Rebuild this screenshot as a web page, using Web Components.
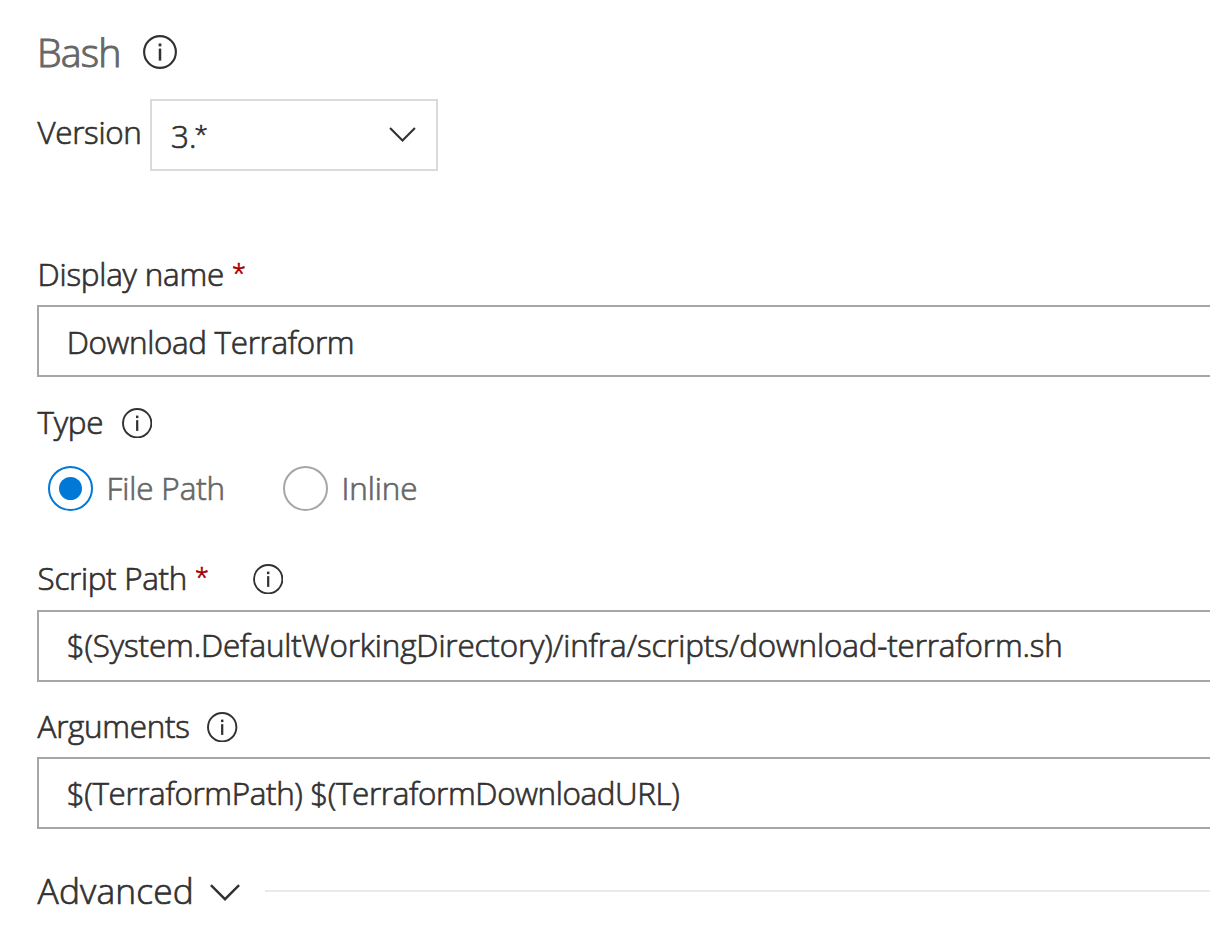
<!DOCTYPE html>
<html lang="en">
<head>
<meta charset="utf-8">
<title>Bash task</title>
<style>
body{margin:0;background:#fff;overflow:hidden}
</style>
</head>
<body>
<task-form></task-form>
<script>
const define=(name,html)=>{
  const t=document.createElement('template');
  t.innerHTML=html;
  customElements.define(name,class extends HTMLElement{
    connectedCallback(){
      if(this.shadowRoot)return;
      this.attachShadow({mode:'open'}).append(t.content.cloneNode(true));
    }
  });
};

define('info-icon',`
<style>:host{display:block;flex:none;width:30.4px;height:30.4px}svg{display:block;width:100%;height:100%}</style>
<svg viewBox="0 0 30 30"><circle cx="15" cy="15" r="14" fill="none" stroke="#323130" stroke-width="1.9"/><rect x="13.8" y="7.5" width="2.4" height="2.5" fill="#323130"/><rect x="13.9" y="12" width="2.2" height="10.6" fill="#323130"/></svg>`);

define('chevron-icon',`
<style>:host{display:block;flex:none;width:27px;height:15px}svg{display:block;width:100%;height:100%}</style>
<svg viewBox="0 0 30 17"><path d="M.9 1.1 15 15.2 29.1 1.1" fill="none" stroke="#323130" stroke-width="2.4"/></svg>`);

define('required-mark',`
<style>:host{display:block;color:#a80000;font-size:25px;line-height:40px;letter-spacing:0}</style>*`);

define('field-label',`
<style>:host{display:flex;height:44px;line-height:44px;padding-left:.6px;white-space:nowrap}
::slotted(info-icon){margin-top:8px}</style><slot></slot>`);

define('text-field',`
<style>:host{display:block;box-sizing:border-box;height:72px;border:2px solid #a6a6a6;border-right:0;padding-left:27.7px;line-height:68px;white-space:nowrap}</style><slot></slot>`);

define('select-box',`
<style>:host{display:flex;box-sizing:border-box;width:288px;height:72px;border:2px solid #dadada;padding:0 20px 0 19px;line-height:70px;justify-content:space-between}
chevron-icon{margin-top:26px}</style><span><slot></slot></span><chevron-icon></chevron-icon>`);

define('radio-option',`
<style>:host{display:flex;height:45px;line-height:43px;color:#666;letter-spacing:-.1px;white-space:nowrap}
i{box-sizing:border-box;width:45px;height:45px;border:2px solid #a6a6a6;border-radius:50%;display:grid;place-items:center;margin-right:13.5px}
:host([checked]) i{border-color:#0078d7}
:host([checked]) i::after{content:"";width:23px;height:23px;border-radius:50%;background:#0078d7}
</style><i></i><slot></slot>`);

define('section-header',`
<style>:host{display:flex;height:44px;line-height:44px;font-size:35.3px;padding-left:.6px}
chevron-icon{width:30px;height:17px;margin:15.5px 25.5px 0 16px}
hr{flex:1;height:2px;border:0;margin:22px 0 0;background:#eaeaea}</style><slot></slot><chevron-icon></chevron-icon><hr>`);

define('task-form',`
<style>
:host{display:block;box-sizing:border-box;height:937px;padding:30px 0 0 37px;color:#323130;font:300 31.4px "Open Sans","Noto Sans",sans-serif;-webkit-text-stroke:.7px currentColor}
.title{color:#666;font-size:39.3px;letter-spacing:-.8px;padding-left:0;-webkit-text-stroke-width:1px}
.title info-icon{width:34px;height:34px;margin:5px 0 0 22.5px}
.version{display:flex;align-items:center;height:72px;margin-top:25px}
.version field-label{box-sizing:border-box;width:113px;margin-bottom:6px;letter-spacing:-.35px}
.star{font-size:24px;margin-left:-2px;position:relative;top:-5px}
.radios{display:flex;margin:22px 0 0 11px}
</style>
<field-label class="title">Bash<info-icon></info-icon></field-label>
<div class="version"><field-label>Version</field-label><select-box>3.<span class="star">*</span></select-box></div>
<field-label style="margin-top:81px;letter-spacing:-.22px">Display name<required-mark style="margin-left:8px"></required-mark></field-label>
<text-field style="margin-top:9px;letter-spacing:-.32px;line-height:70px">Download Terraform</text-field>
<field-label style="margin-top:23px;letter-spacing:-.3px">Type<info-icon style="margin-left:18.6px"></info-icon></field-label>
<div class="radios"><radio-option checked style="width:235px">File Path</radio-option><radio-option>Inline</radio-option></div>
<field-label style="margin-top:45px;letter-spacing:-.3px">Script Path<required-mark style="margin-left:8px"></required-mark><info-icon style="margin-left:44px"></info-icon></field-label>
<text-field style="margin-top:10px;letter-spacing:-.14px;line-height:66px">$(System.DefaultWorkingDirectory)/infra/scripts/download-terraform.sh</text-field>
<field-label style="margin-top:22px;letter-spacing:-.29px">Arguments<info-icon style="margin-left:17.6px"></info-icon></field-label>
<text-field style="margin-top:9px;letter-spacing:-.36px">$(TerraformPath) $(TerraformDownloadURL)</text-field>
<section-header style="margin-top:39px;letter-spacing:.15px">Advanced</section-header>`);
</script>
</body>
</html>
